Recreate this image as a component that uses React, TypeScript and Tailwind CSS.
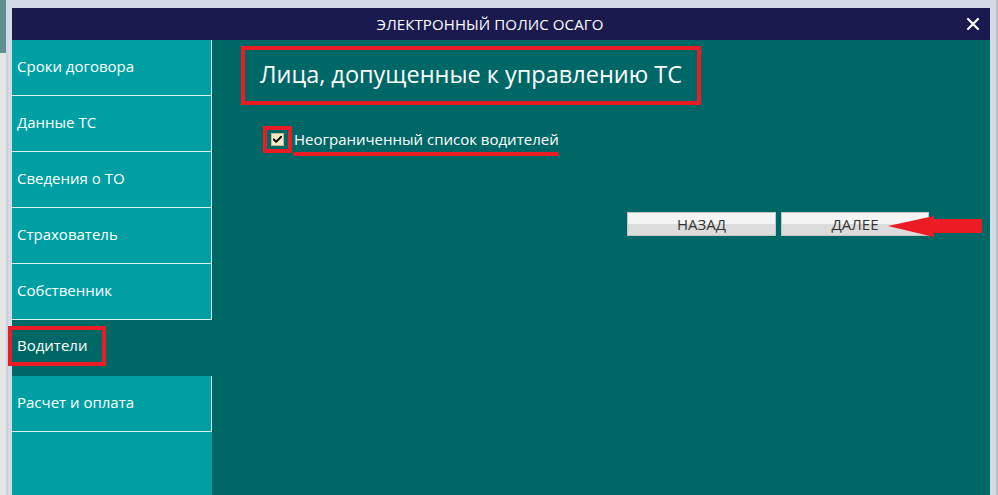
import { Check, X } from "lucide-react";

const menu = [
  "Сроки договора",
  "Данные ТС",
  "Сведения о ТО",
  "Страхователь",
  "Собственник",
  "Водители",
  "Расчет и оплата",
];

const font = { fontFamily: '"Open Sans", "Noto Sans", sans-serif' };

const App = () => {
  return (
    <div className="w-[998px] h-[495px] flex overflow-hidden bg-[#e4e4e4]" style={font}>
      {/* window behind the dialog */}
      <div className="w-[8px] flex flex-col">
        <div className="h-[53px] bg-[#5e8e8e] border-r-2 border-[#cfd8e6]" />
        <div className="flex-1 bg-[#e6e6e6] border-r-2 border-[#c9d2e2]" />
      </div>

      {/* dialog frame */}
      <div className="w-[988px] h-full bg-[#d3dbe7] pt-[8px] pl-[4px] pr-[6px]">
        <div className="relative w-[978px] h-full flex flex-col">
          <div className="h-[32px] shrink-0 bg-[#1b1a4f] flex items-center justify-center relative pr-[22px]">
            <span className="text-white text-[15px] tracking-[0.1px]">ЭЛЕКТРОННЫЙ ПОЛИС ОСАГО</span>
            <X className="absolute right-[7px] top-[6px] text-white" size={20} strokeWidth={2.6} />
          </div>

          <div className="flex flex-1 min-h-0">
            <div className="w-[200px] bg-[#009fa4] flex flex-col">
              {menu.map((item) =>
                item === "Водители" ? (
                  <div key={item} className="h-[56px] bg-[#006767] flex items-center pl-[5px] pb-[6px]">
                    <span className="text-white text-[15px]">{item}</span>
                  </div>
                ) : (
                  <div
                    key={item}
                    className="h-[56px] border-b border-r border-[#d6eeee] flex items-center pl-[5px] pb-[3px]"
                  >
                    <span className="text-white text-[15px]">{item}</span>
                  </div>
                )
              )}
            </div>

            <div className="flex-1 bg-[#006767] pl-[29px] pt-[6px]">
              <div className="w-[460px] h-[59px] border-4 border-[#ec1c24] flex items-center justify-center pb-[2px]">
                <span className="text-white text-[23.5px]">Лица, допущенные к управлению ТС</span>
              </div>

              <div className="mt-[21px] ml-[22px] flex items-center">
                <div className="w-[29px] h-[27px] border-4 border-[#ec1c24] flex items-center justify-center">
                  <div className="w-[13px] h-[13px] bg-[#f6e8c6] border border-[#c9b98f] flex items-center justify-center">
                    <Check size={11} strokeWidth={4} className="text-black" />
                  </div>
                </div>
                <div className="relative ml-[2px] pb-[2px]">
                  <span className="text-white text-[15px]">Неограниченный список водителей</span>
                  <div className="absolute left-[-1px] right-0 bottom-[-3px] h-[4px] rounded-full bg-[#ec1c24]" />
                </div>
              </div>

              <div className="mt-[59px] ml-[386px] flex gap-[5px]">
                <button className="w-[149px] h-[24px] border border-[#c4c4c4] bg-gradient-to-b from-[#f4f4f4] from-50% to-[#dcdcdc] to-50% text-[#333333] text-[15px] leading-none">
                  НАЗАД
                </button>
                <button className="w-[148px] h-[24px] border border-[#c4c4c4] bg-gradient-to-b from-[#f4f4f4] from-50% to-[#dcdcdc] to-50% text-[#333333] text-[15px] leading-none">
                  ДАЛЕЕ
                </button>
              </div>
            </div>
          </div>

          {/* annotation box around the active menu item */}
          <div className="absolute left-[-4px] top-[318px] w-[98px] h-[40px] border-4 border-[#ec1c24]" />

          {/* annotation arrow */}
          <svg className="absolute left-[876px] top-[207px]" width="95" height="23" viewBox="0 0 95 23">
            <path d="M0 11 L46 1 L46 4 L94 4 L94 18 L46 18 L46 22 Z" fill="#ec1c24" />
          </svg>
        </div>
      </div>

      <div className="w-[2px] bg-[#bfbfbf]" />
    </div>
  );
};

export default App;
